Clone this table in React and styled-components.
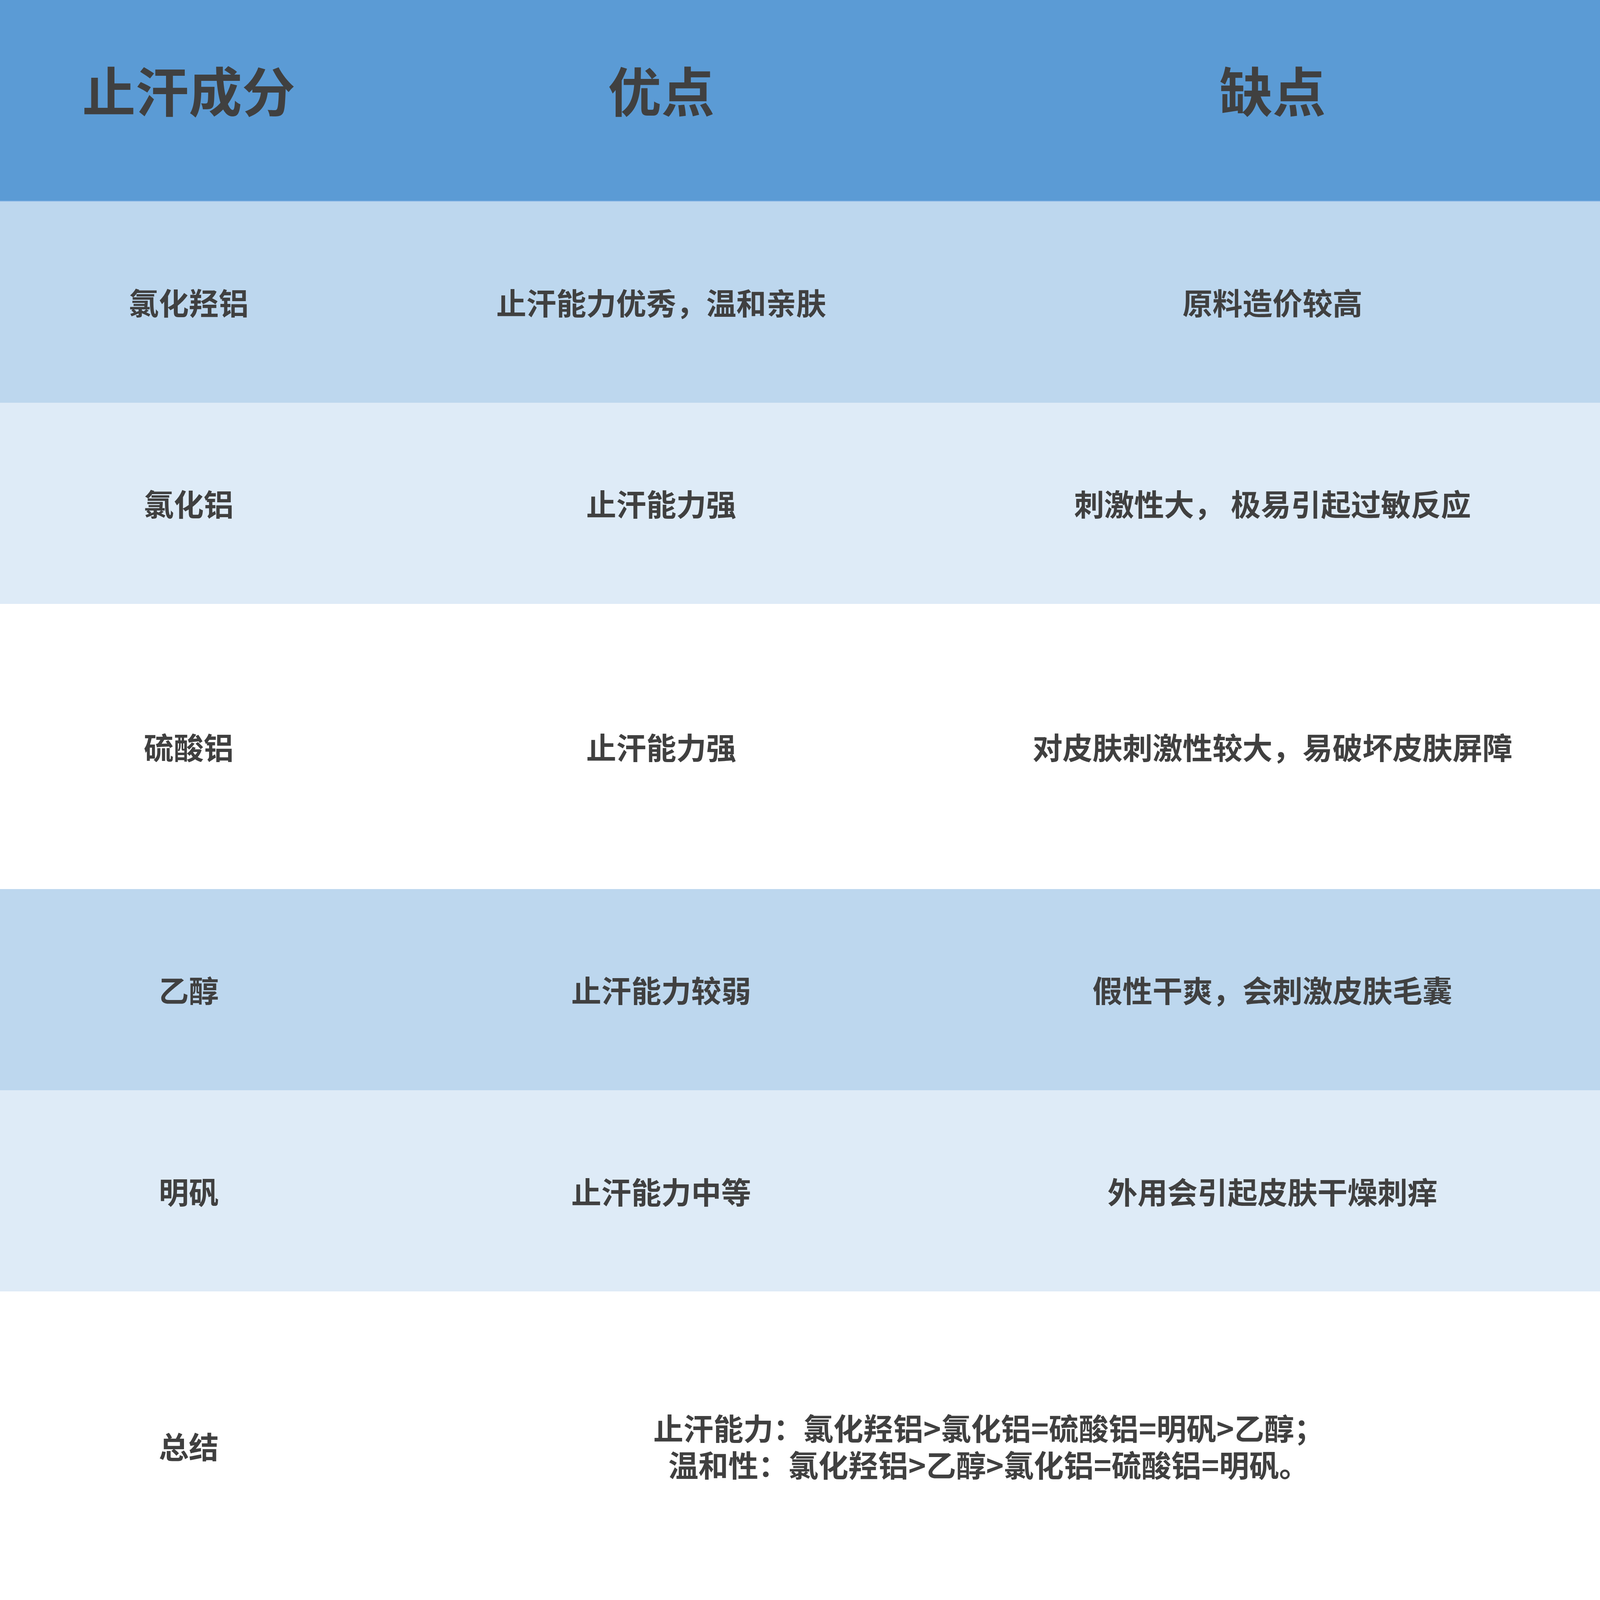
import styled, { createGlobalStyle } from 'styled-components';

const GlobalStyle = createGlobalStyle`
	html, body {
		margin: 0;
		padding: 0;
		background: #fff;
		overflow: hidden;
	}
	body {
		font-family: "Noto Sans CJK SC", "Noto Sans", sans-serif;
		color: #404040;
	}
`;

// the slide is 7680 x 4320, tracks are kept as fractions of it
const Table = styled.div`
	width: 100vw;
	height: 100vh;
	display: grid;
	grid-template-columns: 1812fr 2724fr 3144fr;
	grid-template-rows: 544fr 543fr 544fr 769fr 544fr 543fr 833fr;
	overflow: hidden;
`;

const HeadCell = styled.div`
	display: flex;
	align-items: center;
	justify-content: center;
	background: #5b9bd5;
	border-bottom: 0.06vw solid #8fb9e6;
	box-sizing: border-box;
	padding-bottom: 1.4vh;
	font-size: 3.33vw;
	font-weight: 700;
	line-height: 1;
	min-width: 0;
`;

const rowColors = {
	dark: '#bdd7ee',
	light: '#deebf7',
	white: '#ffffff',
};

const Cell = styled.div`
	display: flex;
	align-items: center;
	justify-content: center;
	text-align: center;
	min-width: 0;
	background: ${({ $tone }) => rowColors[$tone]};
	font-size: 1.875vw;
	font-weight: 700;
	line-height: 1.2;
	white-space: pre;
	grid-column: ${({ $span }) => ($span ? `span ${$span}` : 'auto')};
`;

const SummaryText = styled.div`
	display: flex;
	flex-direction: column;
	align-items: center;
	line-height: 2.3vw;
`;

const rows = [
	{ tone: 'dark', cells: ['氯化羟铝', '止汗能力优秀，温和亲肤', '原料造价较高'] },
	{ tone: 'light', cells: ['氯化铝', '止汗能力强', '刺激性大， 极易引起过敏反应'] },
	{ tone: 'white', cells: ['硫酸铝', '止汗能力强', '对皮肤刺激性较大，易破坏皮肤屏障'] },
	{ tone: 'dark', cells: ['乙醇', '止汗能力较弱', '假性干爽，会刺激皮肤毛囊'] },
	{ tone: 'light', cells: ['明矾', '止汗能力中等', '外用会引起皮肤干燥刺痒'] },
];

const App = () => {
	return (
		<>
			<GlobalStyle />
			<Table>
				<HeadCell>止汗成分</HeadCell>
				<HeadCell>优点</HeadCell>
				<HeadCell>缺点</HeadCell>
				{rows.map((row, i) =>
					row.cells.map((text, j) => (
						<Cell key={`${i}-${j}`} $tone={row.tone}>
							{text}
						</Cell>
					))
				)}
				<Cell $tone='white'>总结</Cell>
				<Cell $tone='white' $span={2}>
					<SummaryText>
						<span>止汗能力：氯化羟铝&gt;氯化铝=硫酸铝=明矾&gt;乙醇；</span>
						<span>温和性：氯化羟铝&gt;乙醇&gt;氯化铝=硫酸铝=明矾。</span>
					</SummaryText>
				</Cell>
			</Table>
		</>
	);
};

export default App;
